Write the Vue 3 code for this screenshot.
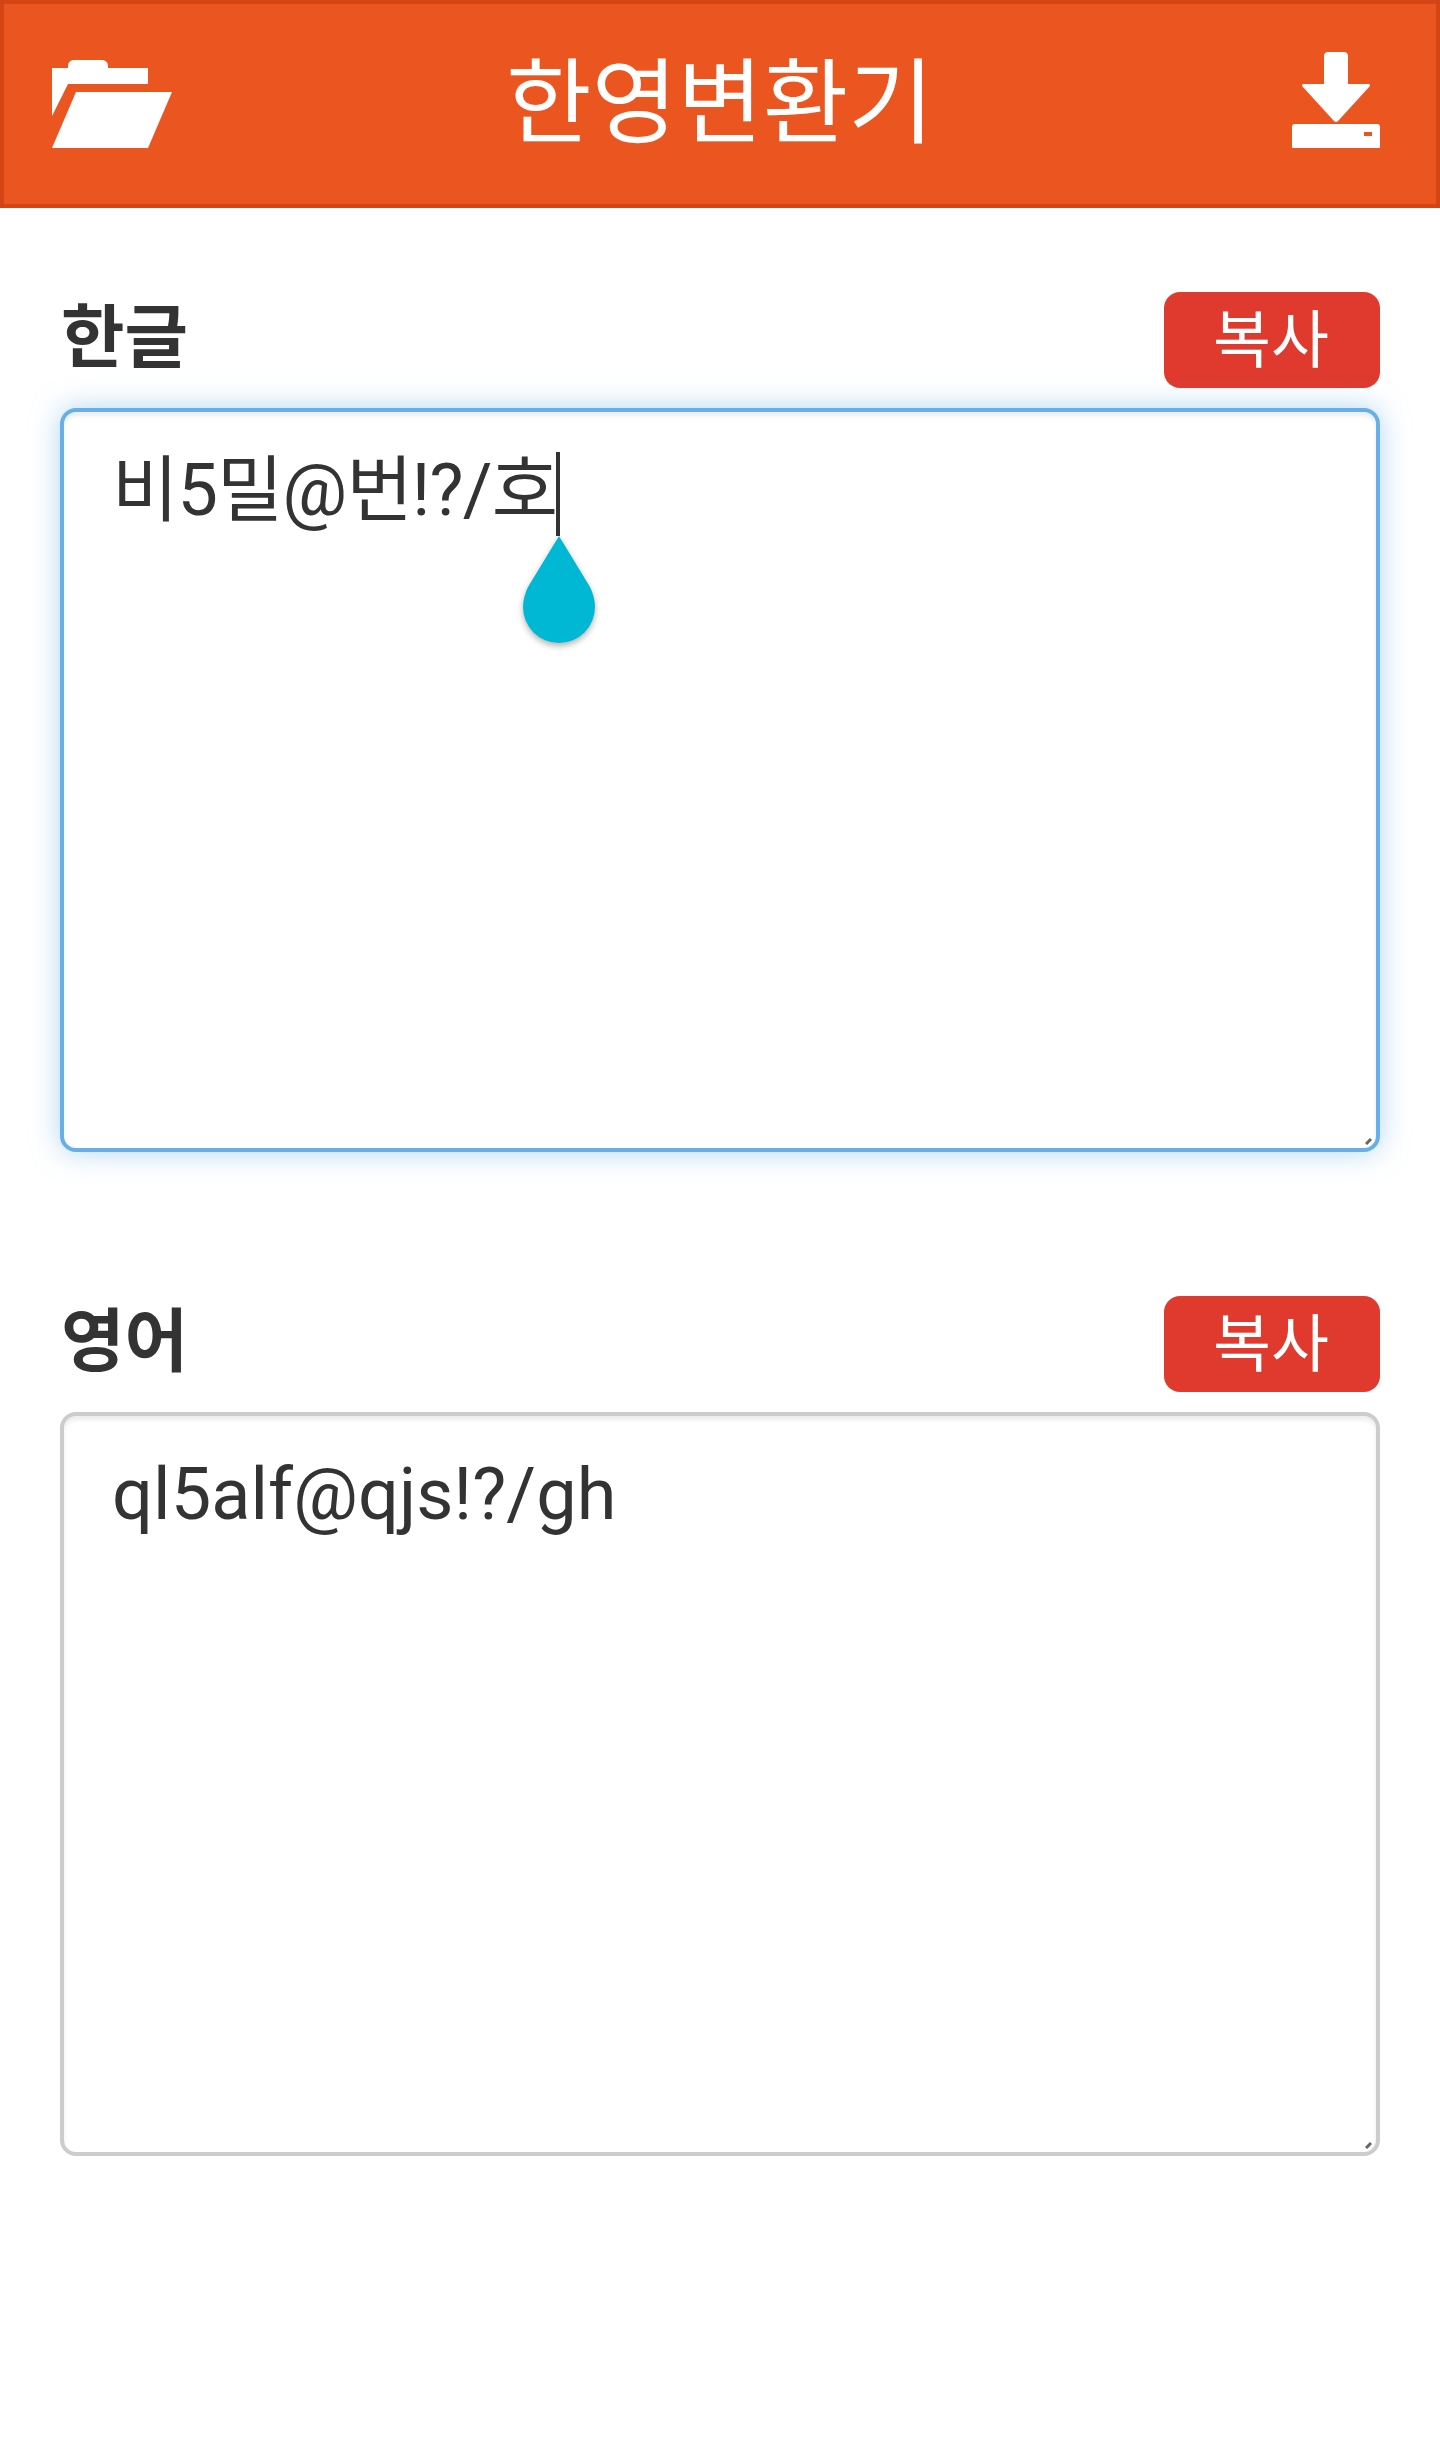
<template>
  <div class="page">
    <header class="app-header">
      <button class="icon-btn" aria-label="열기">
        <svg width="120" height="88" viewBox="0 0 120 88" fill="#fff">
          <path d="M0 8H16V6C16 2.5 18.5 0 22 0H50C53.5 0 56 2.5 56 6V8H96V24H16L0 56Z" />
          <path d="M24 32H120L96 88H0Z" />
        </svg>
      </button>
      <h1 class="title">한영변환기</h1>
      <button class="icon-btn icon-right" aria-label="저장">
        <svg width="88" height="96" viewBox="0 0 88 96" fill="#fff">
          <path d="M32 32V4C32 1.5 33.5 0 36 0H52C54.5 0 56 1.5 56 4V32H76C78 32 78.5 33.2 77.5 34.6L46.5 68.5C45 70.4 43 70.4 41.5 68.5L10.5 34.6C9.5 33.2 10 32 12 32Z" />
          <path fill-rule="evenodd" d="M3 72H85C87 72 88 73 88 75V96H0V75C0 73 1 72 3 72ZM72 80V84H80V80Z" />
        </svg>
      </button>
    </header>

    <main class="content">
      <section v-for="box in boxes" :key="box.label" class="converter">
        <div class="converter-head">
          <label class="converter-label">{{ box.label }}</label>
          <button class="copy-btn">복사</button>
        </div>
        <div class="field">
          <textarea
            class="field-input"
            :class="{ focused: box.focused }"
            :value="box.text"
            spellcheck="false"
            readonly
          ></textarea>
          <svg class="grip" width="8" height="8" viewBox="0 0 8 8">
            <line x1="1" y1="7" x2="6" y2="2" stroke="#666" stroke-width="3" />
          </svg>
          <template v-if="box.focused">
            <span class="caret"></span>
            <svg class="caret-handle" width="72" height="107" viewBox="0 0 72 107" fill="#00b8d4">
              <path d="M36 0L67 51C70 57 72 64 72 71A36 36 0 0 1 0 71C0 64 2 57 5 51Z" />
            </svg>
          </template>
        </div>
      </section>
    </main>
  </div>
</template>

<script setup>
const boxes = [
  { label: '한글', text: '비5밀@번!?/호', focused: true },
  { label: '영어', text: 'ql5alf@qjs!?/gh', focused: false }
];
</script>

<style scoped>
.page {
  width: 1440px;
  height: 2464px;
  background: #fff;
  color: #333;
  font-family: Roboto, "Noto Sans CJK KR", sans-serif;
  overflow: hidden;
}

.app-header {
  box-sizing: border-box;
  height: 208px;
  padding: 0 48px 56px;
  display: grid;
  grid-template-columns: 1fr auto 1fr;
  align-items: end;
  background: #eb5520;
  border: 4px solid #d44516;
}

.icon-btn {
  display: flex;
  padding: 0;
  background: none;
  border: none;
}

.icon-right {
  justify-content: flex-end;
  margin-right: 8px;
}

.title {
  align-self: center;
  margin: 0;
  margin-bottom: -56px;
  font-size: 93px;
  font-weight: 400;
  line-height: 1;
  color: #fff;
}

.content {
  padding: 84px 60px 0;
}

.converter {
  margin-bottom: 144px;
}

.converter-head {
  height: 96px;
  margin-bottom: 20px;
  display: flex;
  align-items: center;
  justify-content: space-between;
}

.converter-label {
  padding-left: 1px;
  padding-bottom: 16px;
  font-size: 69px;
  font-weight: 700;
}

.copy-btn {
  width: 216px;
  height: 96px;
  padding: 0 2px 0 0;
  background: #e03a2e;
  border: none;
  border-radius: 16px;
  color: #fff;
  font-family: inherit;
  font-size: 63px;
  line-height: 1;
}

.field {
  position: relative;
  height: 744px;
}

.field-input {
  display: block;
  box-sizing: border-box;
  width: 100%;
  height: 100%;
  padding: 28px 48px 24px;
  background: #fff;
  border: 4px solid #ccc;
  border-radius: 16px;
  box-shadow: inset 0 4px 4px rgba(0, 0, 0, 0.075);
  color: #333;
  font-family: inherit;
  font-size: 72px;
  letter-spacing: 0.1px;
  line-height: 1.42857;
  outline: none;
  resize: none;
}

.field-input.focused {
  border-color: #66afe9;
  box-shadow: inset 0 4px 4px rgba(0, 0, 0, 0.075), 0 0 28px rgba(102, 175, 233, 0.5);
  letter-spacing: -0.8px;
}

.grip {
  position: absolute;
  right: 7px;
  bottom: 7px;
}

.caret {
  position: absolute;
  left: 496px;
  top: 44px;
  width: 4px;
  height: 84px;
  background: #333;
}

.caret-handle {
  position: absolute;
  left: 463px;
  top: 128px;
  filter: drop-shadow(0 3px 3px rgba(0, 0, 0, 0.3));
}
</style>
